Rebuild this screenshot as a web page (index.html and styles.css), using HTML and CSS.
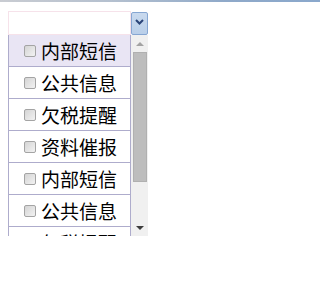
FILE: index.html
```html
<!DOCTYPE html>
<html lang="zh">
<head>
<meta charset="utf-8">
<link rel="stylesheet" href="styles.css">
</head>
<body>
<div class="topbar"></div>
<div class="combo">
  <div class="field"></div>
  <div class="btn">
    <svg width="9" height="6" viewBox="0 0 9 6"><path d="M1 1 L4.5 4.5 L8 1" fill="none" stroke="#2a4479" stroke-width="2"/></svg>
  </div>
</div>
<div class="listbox">
  <div class="items">
    <div class="row active"><span class="cb"></span><span class="label">内部短信</span></div>
    <div class="row"><span class="cb"></span><span class="label">公共信息</span></div>
    <div class="row"><span class="cb"></span><span class="label">欠税提醒</span></div>
    <div class="row"><span class="cb"></span><span class="label">资料催报</span></div>
    <div class="row"><span class="cb"></span><span class="label">内部短信</span></div>
    <div class="row"><span class="cb"></span><span class="label">公共信息</span></div>
    <div class="row"><span class="cb"></span><span class="label">欠税提醒</span></div>
  </div>
  <div class="scroll">
    <div class="arrow"><span class="tri up"></span></div>
    <div class="track"><div class="thumb"></div></div>
    <div class="arrow"><span class="tri down"></span></div>
  </div>
</div>
</body>
</html>
```
FILE: styles.css
```css
html, body {
  margin: 0;
  padding: 0;
  background: #ffffff;
}
body {
  font-family: "Noto Sans CJK SC", "Noto Sans", sans-serif;
}
.topbar {
  height: 2px;
  background: linear-gradient(to right, #c9ccd2 0%, #b4c0cf 35%, #8fa9c9 70%, #8aa8cc 100%);
}
.combo {
  display: flex;
  align-items: flex-start;
  margin: 9px 0 0 8px;
}
.field {
  box-sizing: border-box;
  width: 123px;
  height: 24px;
  border: 1px solid #f6e2ea;
  background: #ffffff;
}
.btn {
  box-sizing: border-box;
  width: 17px;
  height: 23px;
  margin-top: 1px;
  border: 1px solid #86a6d2;
  border-radius: 2px;
  background: linear-gradient(#c9d9ee, #b9cfe9);
  display: flex;
  justify-content: center;
  padding-top: 6px;
}
.btn svg {
  display: block;
}
.listbox {
  display: flex;
  margin-left: 8px;
  height: 201px;
}
.items {
  box-sizing: border-box;
  width: 123px;
  border-left: 1px solid #aeaccc;
  border-right: 1px solid #aeaccc;
  overflow: hidden;
}
.row {
  height: 31px;
  border-bottom: 1px solid #aeaccc;
  display: flex;
  align-items: center;
  padding-left: 15px;
}
.row.active {
  background: #e9e5f4;
}
.cb {
  box-sizing: border-box;
  width: 12px;
  height: 12px;
  border: 1px solid #a4a4a4;
  border-radius: 2px;
  background: linear-gradient(135deg, #d4d4d4, #f2f2f2);
  flex: none;
}
.label {
  margin-left: 5px;
  font-size: 19px;
  line-height: 31px;
  color: #000000;
  white-space: nowrap;
}
.scroll {
  width: 17px;
  background: #f0f0f0;
  display: flex;
  flex-direction: column;
}
.arrow {
  height: 17px;
  display: flex;
  align-items: center;
  justify-content: center;
  flex: none;
}
.tri {
  width: 0;
  height: 0;
  border-left: 4px solid transparent;
  border-right: 4px solid transparent;
}
.tri.up {
  border-bottom: 4px solid #a3a3a3;
}
.tri.down {
  border-top: 4px solid #3c3c3c;
}
.track {
  flex: 1;
  padding: 0 1px 0 2px;
}
.thumb {
  height: 130px;
  background: #bdbdbd;
  border: 1px solid #b0b0b0;
  box-sizing: border-box;
}
```
